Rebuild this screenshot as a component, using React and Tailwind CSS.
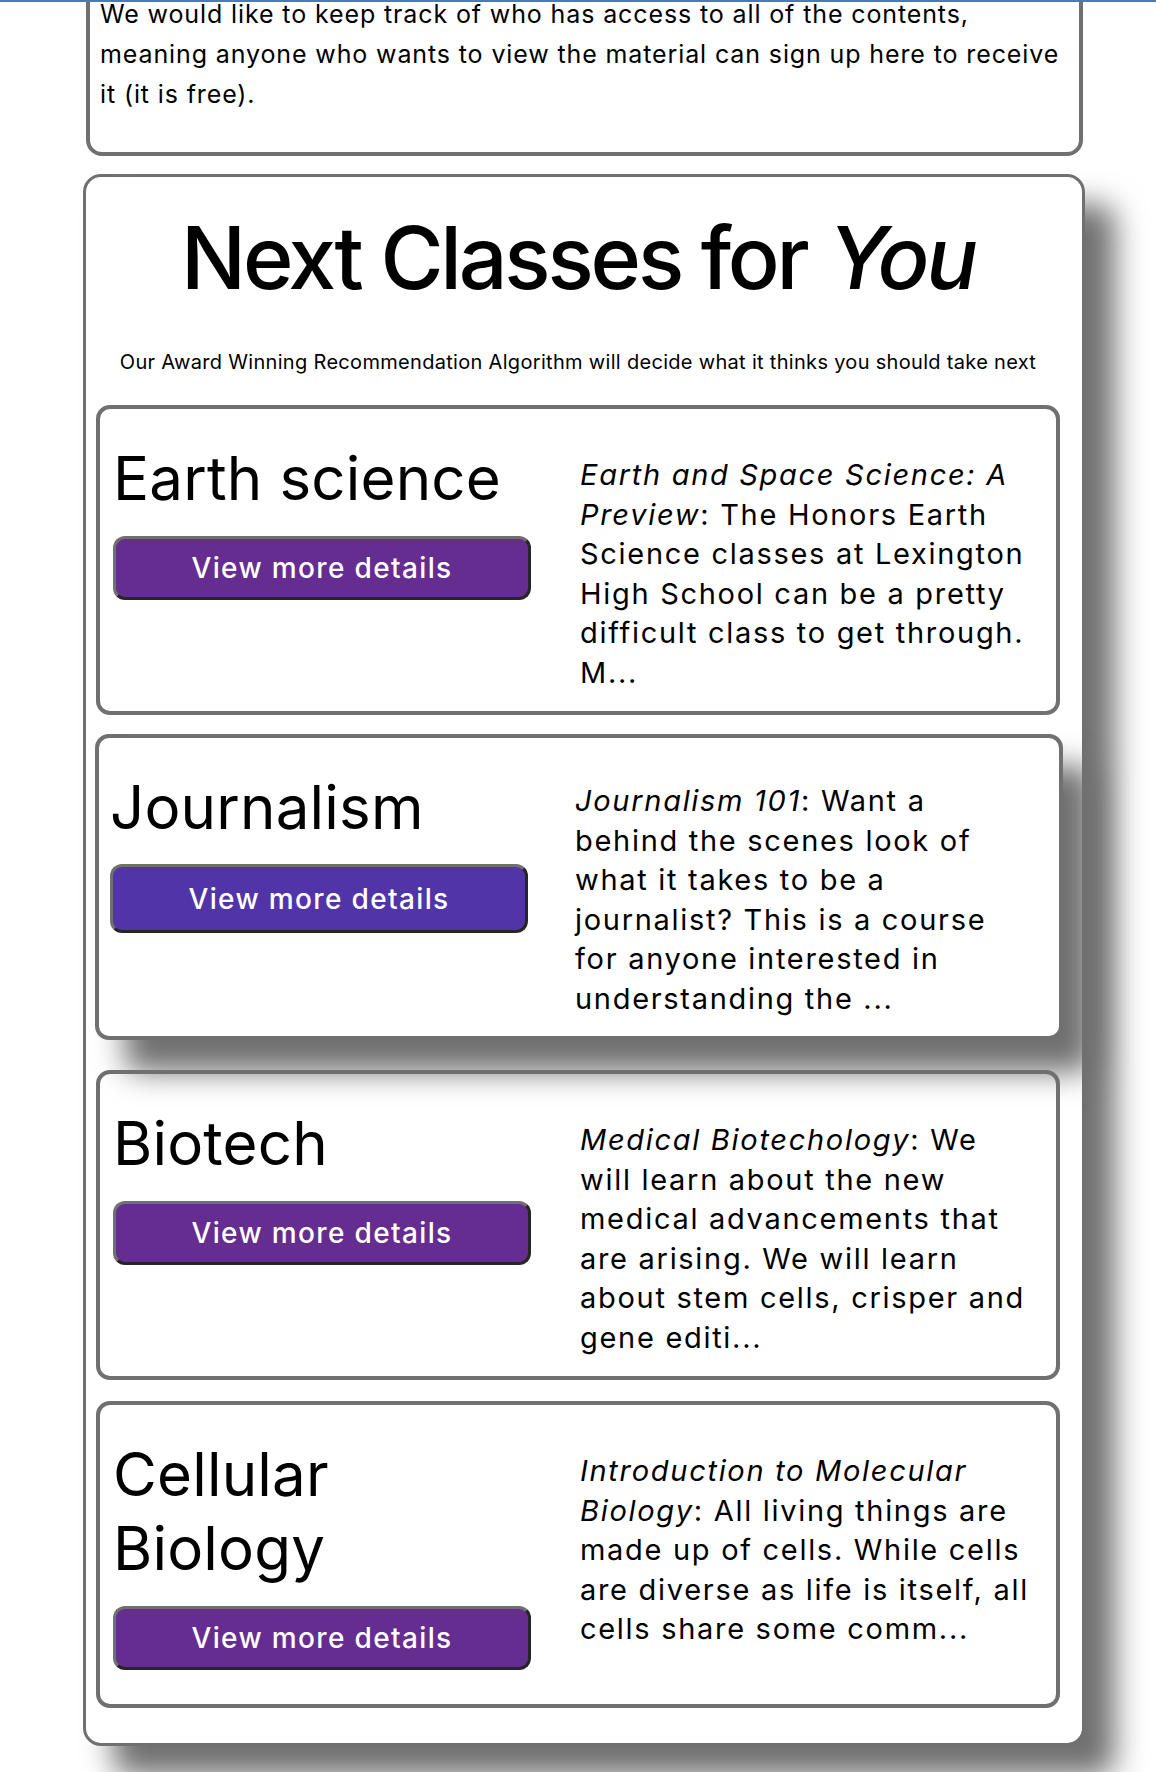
import React from "react";

const courses = [
  {
    title: ["Earth science"],
    lines: [
      [<i key="i">Earth and Space Science: A</i>],
      [<i key="i">Preview</i>, ": The Honors Earth"],
      ["Science classes at Lexington"],
      ["High School can be a pretty"],
      ["difficult class to get through."],
      ["M..."],
    ],
  },
  {
    title: ["Journalism"],
    hover: true,
    lines: [
      [<i key="i">Journalism 101</i>, ": Want a"],
      ["behind the scenes look of"],
      ["what it takes to be a"],
      ["journalist? This is a course"],
      ["for anyone interested in"],
      ["understanding the ..."],
    ],
  },
  {
    title: ["Biotech"],
    lines: [
      [<i key="i">Medical Biotechology</i>, ": We"],
      ["will learn about the new"],
      ["medical advancements that"],
      ["are arising. We will learn"],
      ["about stem cells, crisper and"],
      ["gene editi..."],
    ],
  },
  {
    title: ["Cellular", "Biology"],
    lines: [
      [<i key="i">Introduction to Molecular</i>],
      [<i key="i">Biology</i>, ": All living things are"],
      ["made up of cells. While cells"],
      ["are diverse as life is itself, all"],
      ["cells share some comm..."],
    ],
  },
];

function CourseCard({ c, idx }) {
  const margins = ["mt-[29px]", "mt-[19px]", "mt-[30px]", "mt-[21px]"];
  const hover = c.hover;
  return (
    <div
      className={
        "grid grid-cols-[418px_1fr] rounded-[14px] border-4 border-[#707070] bg-white pr-4 pt-4 " +
        margins[idx] +
        (hover
          ? " relative z-10 -ml-px -mr-[3px] gap-x-[47px] pb-[18px] pl-[11px] shadow-[30px_32px_30px_#707070]"
          : " gap-x-[49px] pb-[19px] pl-[13px]")
      }
    >
      <div className="flex flex-col items-start">
        <h3
          className={
            "text-[60px] font-normal leading-[74px] tracking-[0.2px] " +
            (hover ? "mt-[16px]" : "mt-4")
          }
        >
          {c.title.map((t, i) => (
            <React.Fragment key={i}>
              {i > 0 && <br />}
              {t}
            </React.Fragment>
          ))}
        </h3>
        <button
          className={
            "mb-[15px] flex w-[418px] items-center justify-center rounded-[12px] border-[3px] border-b-[#262626] border-l-[#707070] border-r-[#262626] border-t-[#707070] text-[28px] font-medium tracking-[1.35px] text-white " +
            (hover ? "mt-[20px] h-[69px] bg-[#5135a8]" : "mt-[21px] h-[64px] bg-[#662d91]")
          }
        >
          View more details
        </button>
      </div>
      <p
        className={
          "whitespace-nowrap text-[29px] leading-[39.5px] tracking-[1.7px] " +
          (hover ? "mt-[27px]" : "mt-[30px]")
        }
      >
        {c.lines.map((l, i) => (
          <React.Fragment key={i}>
            {i > 0 && <br />}
            {l}
          </React.Fragment>
        ))}
      </p>
    </div>
  );
}

export default function App() {
  return (
    <div className="min-h-screen overflow-hidden bg-white pb-10 font-['Inter','Noto_Sans',sans-serif] text-black">
      <div className="fixed inset-x-0 top-0 z-50 h-[2px] bg-[#4a7ab8]" />
      <div className="ml-[86px] mt-[-50px] w-[997px] rounded-[16px] border-4 border-[#707070] bg-white pb-[38px] pl-[10px] pr-[10px] pt-[40px]">
        <p className="text-[25px] leading-[40px] tracking-[0.88px]">
          We would like to keep track of who has access to all of the contents,
          <br />
          meaning anyone who wants to view the material can sign up here to receive
          <br />
          it (it is free).
        </p>
      </div>
      <div className="ml-[83px] mt-[18px] w-[1002px] rounded-[18px] border-[3px] border-[#707070] bg-white pb-[35px] pl-[10px] pr-[22px] pt-[30px] shadow-[30px_30px_30px_#707070]">
        <h2 className="text-center text-[86px] font-medium leading-[103px] tracking-[-3.2px]">
          Next Classes for <i className="ml-[2px]">You</i>
        </h2>
        <p className="mt-[38px] text-center text-[20px] leading-[28px] tracking-[0.31px]">
          Our Award Winning Recommendation Algorithm will decide what it thinks you should take next
        </p>
        {courses.map((c, i) => (
          <CourseCard key={i} c={c} idx={i} />
        ))}
      </div>
    </div>
  );
}
